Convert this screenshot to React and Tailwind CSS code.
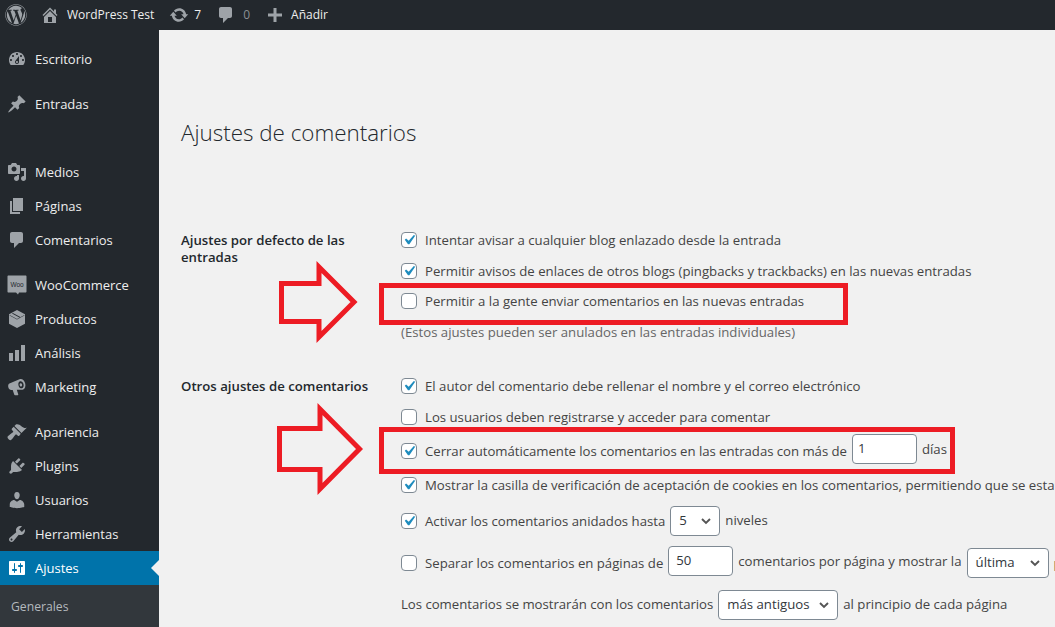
import React from "react";
import { FaWordpress } from "react-icons/fa";

const FONT = "font-['Open_Sans','Noto_Sans',sans-serif]";

const icons = {
  home: "M16 8.5l1.53 1.53-1.06 1.06L10 4.62l-6.47 6.47-1.06-1.06L10 2.5l4 4v-2h2v4zm-6-2.46l6 5.99V18H4v-5.97zM12 17v-5H8v5h4z",
  update: "M10.2 3.28c3.53 0 6.43 2.61 6.92 6h2.08l-3.5 4-3.5-4h2.32c-.45-1.97-2.21-3.45-4.32-3.45-1.45 0-2.73.71-3.54 1.78L4.95 5.66C6.23 4.2 8.11 3.28 10.2 3.28zm-.4 13.44c-3.52 0-6.43-2.61-6.92-6H.8l3.5-4c1.17 1.33 2.33 2.67 3.5 4H5.48c.45 1.97 2.21 3.45 4.32 3.45 1.45 0 2.73-.71 3.54-1.78l1.71 1.95c-1.28 1.46-3.15 2.38-5.25 2.38z",
  comment: "M5 2h9c1.1 0 2 .9 2 2v7c0 1.1-.9 2-2 2h-2l-5 5v-5H5c-1.1 0-2-.9-2-2V4c0-1.1.9-2 2-2z",
  plus: "M17 8.5v3h-5.5V17h-3v-5.5H3v-3h5.5V3h3v5.5z",
  dashboard: "M3.76 16h12.48c1.1-1.37 1.76-3.11 1.76-5 0-4.42-3.58-8-8-8s-8 3.58-8 8c0 1.89.66 3.63 1.76 5zM10 4c.55 0 1 .45 1 1s-.45 1-1 1-1-.45-1-1 .45-1 1-1zM6 6c.55 0 1 .45 1 1s-.45 1-1 1-1-.45-1-1 .45-1 1-1zm8 0c.55 0 1 .45 1 1s-.45 1-1 1-1-.45-1-1 .45-1 1-1zm-5.37 5.55L12 7v6c0 1.1-.9 2-2 2s-2-.9-2-2c0-.57.24-1.08.63-1.45zM4 10c.55 0 1 .45 1 1s-.45 1-1 1-1-.45-1-1 .45-1 1-1zm12 0c.55 0 1 .45 1 1s-.45 1-1 1-1-.45-1-1 .45-1 1-1zm-5 3c0-.55-.45-1-1-1s-1 .45-1 1 .45 1 1 1 1-.45 1-1z",
  post: "M10.44 3.02l1.82-1.82 6.36 6.35-1.83 1.82c-1.05-.68-2.48-.57-3.41.36l-.75.75c-.92.93-1.04 2.35-.35 3.41l-1.83 1.82-2.41-2.41-2.8 2.79c-.42.42-3.38 2.71-3.8 2.29s1.86-3.39 2.28-3.81l2.79-2.79L4.1 9.36l1.83-1.82c1.05.69 2.48.57 3.4-.36l.75-.75c.93-.92 1.05-2.35.36-3.41z",
  media: "M13 11V4c0-.55-.45-1-1-1h-1.67L9 1H5L3.67 3H2c-.55 0-1 .45-1 1v7c0 .55.45 1 1 1h10c.55 0 1-.45 1-1zM7 4.5c1.38 0 2.5 1.12 2.5 2.5S8.38 9.5 7 9.5 4.5 8.38 4.5 7 5.62 4.5 7 4.5zM14 6h5v10.5c0 1.38-1.12 2.5-2.5 2.5S14 17.88 14 16.5s1.12-2.5 2.5-2.5c.17 0 .34.02.5.05V9h-3V6zm-4 8.05V13h2v3.5c0 1.38-1.12 2.5-2.5 2.5S7 17.88 7 16.5 8.12 14 9.5 14c.17 0 .34.02.5.05z",
  page: "M6 15V2h10v13H6zm-1 1h8v2H3V5h2v11z",
  product: "M10 1l8 4.2v9.6L10 19l-8-4.2V5.2zM2.6 6.6l7.4 4 7.4-4v-.5l-7.4 4-7.4-4zM5 4.6l7.4 4 .9-.5-7.4-4z",
  chart: "M18 18V2h-4v16h4zm-6 0V7H8v11h4zm-6 0v-8H2v8h4z",
  megaphone: "M12.5 2.2c2.6-.9 5 1.3 5.7 4.2.7 2.9-.2 5.7-2.6 6.3H9.8l1.5 4.7c.1.4-.2.8-.6.8H8c-.3 0-.6-.2-.7-.5L5.7 13H4.2c-1.2 0-2.4-1.1-2.9-2.8-.4-1.7 0-3.2 1.1-3.7zm.6 2c-1.5.4-2.1 2.2-1.6 4.2.5 2 2 3.2 3.4 2.9 1.5-.4 2.1-2.2 1.6-4.2-.5-2-2-3.3-3.4-2.9zm.4 2.1c.7-.2 1.4.4 1.6 1.3.2.9-.1 1.7-.8 1.9-.7.2-1.4-.4-1.6-1.3-.2-.9.1-1.7.8-1.9z",
  brush: "M14.48 11.06L7.41 3.99l1.5-1.5c.5-.56 2.3-.47 3.51.32 1.21.8 1.43 1.28 2.91 2.1 1.18.64 2.45 1.26 4.45.85zm-.71.71L6.7 4.7 4.93 6.47c-.39.39-.39 1.02 0 1.41l1.06 1.06c.39.39.39 1.03 0 1.42-.6.6-5.5 3.7-5.5 4.9 0 1 2 3 3 3 1.2 0 4.3-4.9 4.9-5.5.39-.39 1.02-.39 1.41 0l1.06 1.06c.39.39 1.02.39 1.41 0z",
  plugin: "M13.11 4.36L9.87 7.6 8 5.73l3.24-3.24c.35-.34 1.05-.2 1.56.32.52.51.66 1.21.31 1.55zm-8 1.77l.91-1.12 9.01 9.01-1.19.84c-.71.71-2.63 1.16-3.82 1.16H6.14L4.9 17.26c-.59.59-1.54.59-2.12 0-.59-.58-.59-1.53 0-2.12l1.24-1.24v-3.88c0-1.13.4-3.19 1.09-3.89zm7.26 3.97l3.24-3.24c.34-.35 1.04-.21 1.55.31.52.51.66 1.21.31 1.55l-3.24 3.25z",
  users: "M10 9.25c-2.27 0-2.73-3.44-2.73-3.44C7 4.02 7.82 2 9.97 2c2.16 0 2.98 2.02 2.71 3.81 0 0-.41 3.44-2.68 3.44zm0 2.57L12.72 10c2.39 0 4.52 2.33 4.52 4.53v2.49s-3.65 1.13-7.24 1.13c-3.65 0-7.24-1.13-7.24-1.13v-2.49c0-2.25 1.94-4.48 4.47-4.48z",
  tools: "M16.68 9.77c-1.34 1.34-3.3 1.67-4.95.99l-5.41 6.52c-.99.99-2.59.99-3.58 0s-.99-2.59 0-3.57l6.52-5.42c-.68-1.65-.35-3.61.99-4.95 1.28-1.28 3.12-1.62 4.72-1.06l-2.89 2.89 2.82 2.82 2.86-2.87c.53 1.58.18 3.39-1.08 4.65zM3.81 16.21c.4.39 1.04.39 1.43 0 .4-.4.4-1.04 0-1.43-.39-.4-1.03-.4-1.43 0-.39.39-.39 1.03 0 1.43z",
  settings: "M18 16V4c0-.55-.45-1-1-1H3c-.55 0-1 .45-1 1v12c0 .55.45 1 1 1h14c.55 0 1-.45 1-1zM8 11h1c.55 0 1 .45 1 1s-.45 1-1 1H8v1.5c0 .28-.22.5-.5.5s-.5-.22-.5-.5V13H6c-.55 0-1-.45-1-1s.45-1 1-1h1V5.5c0-.28.22-.5.5-.5s.5.22.5.5V11zm5-2h-1c-.55 0-1-.45-1-1s.45-1 1-1h1V5.5c0-.28.22-.5.5-.5s.5.22.5.5V7h1c.55 0 1 .45 1 1s-.45 1-1 1h-1v5.5c0 .28-.22.5-.5.5s-.5-.22-.5-.5V9z",
};

const Icon = ({ name, className }) => (
  <svg viewBox="0 0 20 20" fill="currentColor" fillRule="evenodd" className={className}>
    <path d={icons[name]} />
  </svg>
);

const WooIcon = () => (
  <svg viewBox="0 0 20 20" className="w-5 h-5 text-[#9ea3a8]">
    <path fill="currentColor" d="M1.5 0.5h17c.6 0 1 .4 1 1v15c0 .6-.4 1-1 1h-6.5l-1 2-2-2H1.5c-.6 0-1-.4-1-1v-15c0-.6.4-1 1-1z" />
    <text x="10" y="11.5" textAnchor="middle" fontSize="6.5" fill="#23282d" fontFamily="Liberation Sans, sans-serif">Woo</text>
  </svg>
);

const menuGroups = [
  { mt: "mt-3", items: [["dashboard", "Escritorio"]] },
  { mt: "mt-[11px]", items: [["post", "Entradas"]] },
  { mt: "mt-[34px]", items: [["media", "Medios"], ["page", "Páginas"], ["comment", "Comentarios"]] },
  { mt: "mt-[11px]", items: [["woo", "WooCommerce"], ["product", "Productos"], ["chart", "Análisis"], ["megaphone", "Marketing"]] },
  { mt: "mt-[11px]", items: [["brush", "Apariencia"], ["plugin", "Plugins"], ["users", "Usuarios"], ["tools", "Herramientas"]] },
];

const MenuItem = ({ icon, label }) => (
  <div className="h-[34px] flex items-center pl-[7px] gap-2 text-[#eeeeee] text-[13px]">
    {icon === "woo" ? <WooIcon /> : <Icon name={icon} className="w-5 h-5 text-[#9ea3a8]" />}
    <span className="mt-[2px]">{label}</span>
  </div>
);

const Sidebar = () => (
  <aside className="w-[159px] shrink-0 bg-[#23282d]">
    {menuGroups.map((g, i) => (
      <div key={i} className={g.mt}>
        {g.items.map(([icon, label]) => (
          <MenuItem key={label} icon={icon} label={label} />
        ))}
      </div>
    ))}
    <div className="relative h-[34px] flex items-center pl-[7px] gap-2 bg-[#0073aa] text-white text-[13px]">
      <Icon name="settings" className="w-5 h-5" />
      <span className="mt-[2px]">Ajustes</span>
      <span className="absolute right-0 top-[9px] border-y-8 border-r-8 border-y-transparent border-r-[#f1f1f1]" />
    </div>
    <div className="bg-[#32373c] pt-[13px] h-[60px] pl-[11px] text-[12.2px] text-[#b4b9be]">Generales</div>
  </aside>
);

const TopBar = () => (
  <header className="h-[30px] shrink-0 bg-[#23282d] flex items-center text-[#eeeeee] text-[12px] whitespace-nowrap">
    <FaWordpress className="ml-[5px] w-[22px] h-[22px] text-[#9ea3a8]" />
    <Icon name="home" className="ml-[13px] w-[20px] h-[20px] text-[#9ea3a8]" />
    <span className="ml-[7px]">WordPress Test</span>
    <Icon name="update" className="ml-[15px] w-[20px] h-[20px] text-[#9ea3a8]" />
    <span className="ml-[5px]">7</span>
    <Icon name="comment" className="ml-[15px] w-[20px] h-[20px] text-[#9ea3a8]" />
    <span className="ml-[7px] text-[#8a8f94]">0</span>
    <Icon name="plus" className="ml-[15px] w-[20px] h-[20px] text-[#9ea3a8]" />
    <span className="ml-[6px]">Añadir</span>
  </header>
);

const Checkbox = ({ checked }) => (
  <span className="w-4 h-4 mr-2 mb-[2px] shrink-0 flex items-center justify-center rounded-[4px] border border-[#7e8993] bg-white">
    {checked && (
      <svg viewBox="0 0 20 20" className="w-5 h-5 shrink-0 text-[#1e8cbe]" fill="currentColor">
        <path d="M14.83 4.89l1.34.94-5.81 8.38H9.02L5.78 9.67l1.34-1.25 2.57 2.4z" />
      </svg>
    )}
  </span>
);

const TextBox = ({ value, className }) => (
  <span className={`w-[65px] h-[30px] shrink-0 flex items-center rounded-[4px] border border-[#7e8993] bg-white text-[#32373c] ${className}`}>
    {value}
  </span>
);

const SelectBox = ({ value, className }) => (
  <span className={`h-[30px] shrink-0 flex items-center justify-between pl-[8px] pr-[5px] rounded-[4px] border border-[#7e8993] bg-white text-[#32373c] ${className}`}>
    {value}
    <svg viewBox="0 0 20 20" className="w-4 h-4 text-[#555]" fill="none" stroke="currentColor" strokeWidth="2.4">
      <path d="M5 7.5l5 5 5-5" />
    </svg>
  </span>
);

const Row = ({ mt = "", checked, children }) => (
  <div className={`h-[30px] pt-[2px] flex items-center whitespace-nowrap ${mt}`}>
    {checked !== undefined && <Checkbox checked={checked} />}
    {children}
  </div>
);

const Section = ({ title, children, className = "" }) => (
  <section className={`flex ${className}`}>
    <h2 className="w-[220px] shrink-0 pr-6 pt-[7px] font-semibold text-[13.2px] leading-[17px] text-[#23282d]">{title}</h2>
    <div>{children}</div>
  </section>
);

const Arrow = ({ points }) => (
  <svg className="absolute left-0 top-0 overflow-visible" width="1" height="1">
    <polygon points={points} fill="none" stroke="#ed1c24" strokeWidth="5" strokeLinejoin="miter" />
  </svg>
);

const App = () => (
  <div className={`h-[627px] w-[1055px] overflow-hidden flex flex-col relative text-[13.2px] text-[#444444] ${FONT}`}>
    <TopBar />
    <div className="flex flex-1 min-h-0">
      <Sidebar />
      <main className="flex-1 min-w-0 bg-[#f1f1f1] pl-[22px]">
        <h1 className="mt-[86px] h-[34px] flex items-center text-[22.4px] font-light text-[#23282d]">Ajustes de comentarios</h1>
        <Section title="Ajustes por defecto de las entradas" className="mt-[75px]">
          <Row checked={true}>Intentar avisar a cualquier blog enlazado desde la entrada</Row>
          <Row mt="mt-px" checked={true}>Permitir avisos de enlaces de otros blogs (pingbacks y trackbacks) en las nuevas entradas</Row>
          <Row checked={false}>Permitir a la gente enviar comentarios en las nuevas entradas</Row>
          <Row mt="mt-px"><span className="text-[#666666]">(Estos ajustes pueden ser anulados en las entradas individuales)</span></Row>
        </Section>
        <Section title="Otros ajustes de comentarios" className="mt-6">
          <Row checked={true}>El autor del comentario debe rellenar el nombre y el correo electrónico</Row>
          <Row mt="mt-px" checked={false}>Los usuarios deben registrarse y acceder para comentar</Row>
          <Row mt="mt-1" checked={true}>
            <span className="tracking-[-0.035px]">Cerrar automáticamente los comentarios en las entradas con más de</span>
            <TextBox value="1" className="ml-[5px] mb-[6px] pl-[5px]" />
            <span className="ml-[5px] mb-1">días</span>
          </Row>
          <Row mt="mt-1" checked={true}>Mostrar la casilla de verificación de aceptación de cookies en los comentarios, permitiendo que se establezca una cookie</Row>
          <Row mt="mt-[6px]" checked={true}>
            Activar los comentarios anidados hasta
            <SelectBox value="5" className="ml-[5px] mb-[2px] w-[50px]" />
            <span className="ml-[5px] mb-[2px]">niveles</span>
          </Row>
          <Row mt="mt-3" checked={false}>
            Separar los comentarios en páginas de
            <TextBox value="50" className="ml-[5px] mb-[6px] pl-[7px]" />
            <span className="ml-[5px] mb-1">comentarios por página y mostrar la</span>
            <SelectBox value="última" className="ml-[5px] mb-[2px] w-[82px]" />
            <span className="ml-[5px]">página por defecto</span>
          </Row>
          <Row mt="mt-[11px]">
            <span className="tracking-[-0.03px]">Los comentarios se mostrarán con los comentarios</span>
            <SelectBox value="más antiguos" className="ml-[5px] w-[120px]" />
            <span className="ml-[5px]">al principio de cada página</span>
          </Row>
        </Section>
      </main>
    </div>

    <div className="absolute left-[379px] top-[283px] w-[469px] h-[42px] border-[5px] border-[#ed1c24]" />
    <div className="absolute left-[379px] top-[427px] w-[576px] h-[47px] border-[5px] border-[#ed1c24]" />
    <Arrow points="281.5,283.5 319,283.5 319,267 354,302 319,337 319,321.5 281.5,321.5" />
    <Arrow points="279.5,428.5 320,428.5 320,409 359.5,449 320,489 320,469.5 279.5,469.5" />
  </div>
);

export default App;
